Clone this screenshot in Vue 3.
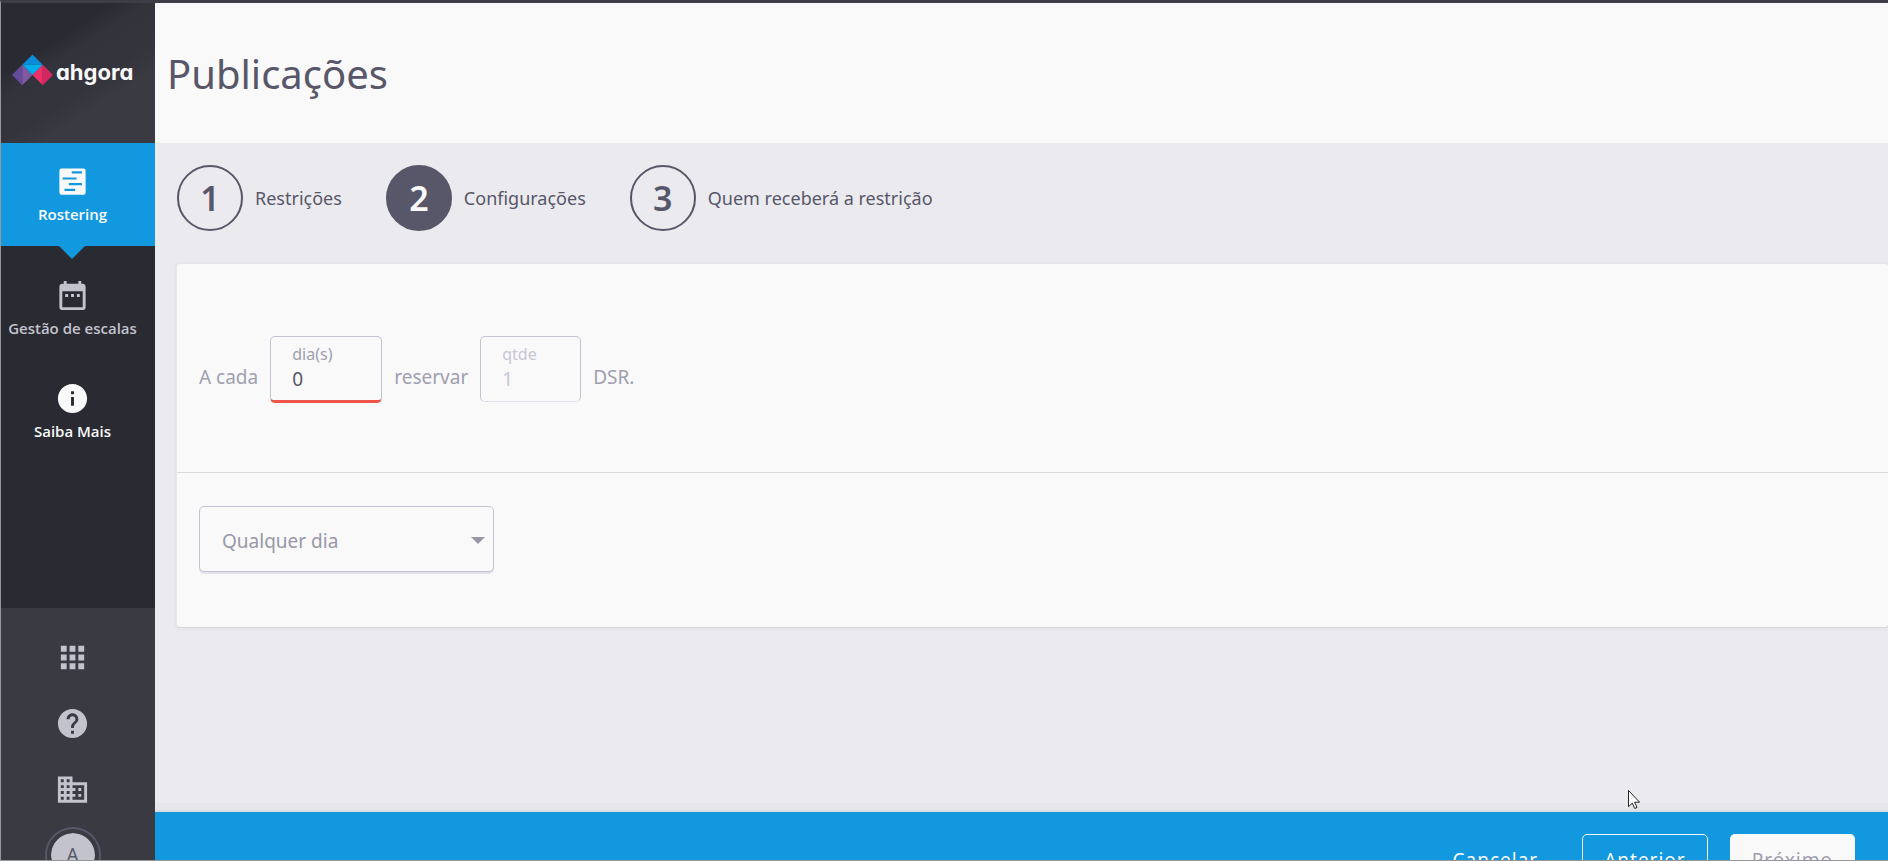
<template>
  <div class="app">
    <aside class="sidebar">
      <a class="logo" href="#">
        <svg class="logo-mark" viewBox="0 0 42 32" width="41" height="32" aria-hidden="true">
          <path d="M10.5 10.5 21 0l10.5 10.5z" fill="#0b8bd8" />
          <path d="M10.5 10.5h21L21 21z" fill="#00aeee" />
          <path d="M10.5 10.5v21L0 21z" fill="#654c9a" />
          <path d="M10.5 10.5 21 21 10.5 31.5z" fill="#8159a3" />
          <path d="M31.5 10.5v21L21 21z" fill="#ee3068" />
          <path d="M31.5 10.5 42 21 31.5 31.5z" fill="#d42660" />
        </svg>
        <span class="logo-text">ahgora</span>
      </a>

      <nav class="menu">
        <a
          v-for="item in menu"
          :key="item.label"
          href="#"
          class="menu-item"
          :class="item.state"
        >
          <svg class="icon" viewBox="0 0 24 24" aria-hidden="true"><path :d="item.icon" /></svg>
          <span class="menu-label">{{ item.label }}</span>
        </a>
      </nav>

      <div class="tools">
        <button v-for="tool in tools" :key="tool.label" class="tool" type="button" :aria-label="tool.label">
          <svg class="icon" viewBox="0 0 24 24" aria-hidden="true"><path :d="tool.icon" /></svg>
        </button>
        <button class="tool" type="button">
          <span class="avatar"><span class="avatar-letter">A</span></span>
        </button>
      </div>
    </aside>

    <main class="main">
      <header class="page-header">
        <h1 class="page-title">Publicações</h1>
      </header>

      <section class="content">
        <ol class="steps">
          <li v-for="(step, index) in steps" :key="step" class="step">
            <span class="step-number" :class="{ active: index === currentStep }">{{ index + 1 }}</span>
            <span class="step-label">{{ step }}</span>
          </li>
        </ol>

        <form class="card" @submit.prevent>
          <div class="rule-row">
            <span>A cada</span>
            <div class="field invalid">
              <label for="days">dia(s)</label>
              <input id="days" v-model="days" type="text" />
            </div>
            <span>reservar</span>
            <div class="field disabled">
              <label for="amount">qtde</label>
              <input id="amount" v-model="amount" type="text" disabled />
            </div>
            <span>DSR.</span>
          </div>
          <div class="day-row">
            <div class="select-box">
              <select v-model="day" aria-label="Qualquer dia">
                <option value="any">Qualquer dia</option>
              </select>
              <svg class="caret" viewBox="0 0 14 7" aria-hidden="true"><path d="M0 0h14L7 7z" /></svg>
            </div>
          </div>
        </form>
      </section>

      <footer class="footer">
        <div class="actions">
          <button class="btn btn-text" type="button">Cancelar</button>
          <button class="btn btn-outline" type="button" @click="previous">Anterior</button>
          <button class="btn btn-solid" type="button" disabled>Próximo</button>
        </div>
      </footer>
    </main>

    <svg class="pointer" viewBox="0 0 12 19" aria-hidden="true">
      <path d="M.5.5v16.200l3.800-3.600 2.400 5.400 2.300-1-2.400-5.300h5z" />
    </svg>
  </div>
</template>

<script setup>
import { ref } from 'vue'

const menu = [
  {
    label: 'Rostering',
    state: 'active',
    icon: 'M4.500 3h15A1.500 1.500 0 0 1 21 4.500v15a1.500 1.500 0 0 1-1.500 1.500h-15A1.500 1.500 0 0 1 3 19.500v-15A1.500 1.500 0 0 1 4.500 3zM11.500 5v1.500h7V5zM5.200 9.200v1.500h9.600V9.200zM9.500 13v1.500h9V13zM6.500 17v1.500h7.300V17z'
  },
  {
    label: 'Gestão de escalas',
    state: '',
    icon: 'M9 11H7v2h2v-2zm4 0h-2v2h2v-2zm4 0h-2v2h2v-2zm2-7h-1V2h-2v2H8V2H6v2H5c-1.110 0-1.990.9-1.990 2L3 20c0 1.100.89 2 2 2h14c1.100 0 2-.9 2-2V6c0-1.100-.9-2-2-2zm0 16H5V9h14v11z'
  },
  {
    label: 'Saiba Mais',
    state: 'bright',
    icon: 'M12 2C6.480 2 2 6.480 2 12s4.480 10 10 10 10-4.480 10-10S17.520 2 12 2zm1 15h-2v-6h2v6zm0-8h-2V7h2v2z'
  }
]

const tools = [
  {
    label: 'Aplicativos',
    icon: 'M4 8h4V4H4v4zm6 12h4v-4h-4v4zm-6 0h4v-4H4v4zm0-6h4v-4H4v4zm6 0h4v-4h-4v4zm6-10v4h4V4h-4zm-6 4h4V4h-4v4zm6 6h4v-4h-4v4zm0 6h4v-4h-4v4z'
  },
  {
    label: 'Ajuda',
    icon: 'M12 2C6.480 2 2 6.480 2 12s4.480 10 10 10 10-4.480 10-10S17.520 2 12 2zm1 17h-2v-2h2v2zm2.070-7.750l-.9.920C13.450 12.900 13 13.500 13 15h-2v-.5c0-1.100.45-2.100 1.170-2.830l1.240-1.260c.37-.36.59-.86.59-1.410 0-1.100-.9-2-2-2s-2 .9-2 2H8c0-2.210 1.790-4 4-4s4 1.790 4 4c0 .88-.36 1.680-.93 2.250z'
  },
  {
    label: 'Empresa',
    icon: 'M12 7V3H2v18h20V7H12zM6 19H4v-2h2v2zm0-4H4v-2h2v2zm0-4H4V9h2v2zm0-4H4V5h2v2zm4 12H8v-2h2v2zm0-4H8v-2h2v2zm0-4H8V9h2v2zm0-4H8V5h2v2zm10 12h-8v-2h2v-2h-2v-2h2v-2h-2V9h8v10zm-2-8h-2v2h2v-2zm0 4h-2v2h2v-2z'
  }
]

const steps = ['Restrições', 'Configurações', 'Quem receberá a restrição']
const currentStep = ref(1)

const days = ref('0')
const amount = ref('1')
const day = ref('any')

const previous = () => {
  if (currentStep.value > 0) {
    currentStep.value--
  }
}
</script>

<style>
body {
  margin: 0;
}
</style>

<style scoped>
.app {
  position: relative;
  display: flex;
  box-sizing: border-box;
  height: 100vh;
  overflow: hidden;
  border-top: 3px solid #3d3d45;
  border-left: 1px solid #97979b;
  border-bottom: 1px solid #97979b;
  background: #ebebef;
  color: #575769;
  font-family: "Noto Sans", "Open Sans", sans-serif;
}

button,
input,
select {
  font-family: inherit;
}

a {
  text-decoration: none;
}

.icon {
  display: block;
  width: 35px;
  height: 35px;
  fill: currentColor;
}

.sidebar {
  display: flex;
  flex-direction: column;
  flex: 0 0 154px;
  overflow: hidden;
  background: #2a2a32;
}

.logo {
  display: flex;
  align-items: center;
  flex: 0 0 140px;
  gap: 3px;
  box-sizing: border-box;
  padding: 0 0 6px 11px;
  background: linear-gradient(147deg, #2a2a32 30%, #33333b 40%, #34343c 58%, #3a3a43 70%);
}

.logo-mark {
  flex: none;
}

.logo-text {
  padding-top: 4px;
  color: #f9f9f9;
  font-family: Inter, sans-serif;
  font-size: 22px;
  font-weight: 700;
  font-feature-settings: "cv11";
  line-height: 28px;
}

.menu {
  display: flex;
  flex-direction: column;
  flex: 1;
  min-height: 0;
}

.menu-item {
  display: flex;
  flex-direction: column;
  align-items: center;
  gap: 5px;
  box-sizing: border-box;
  height: 103px;
  padding: 21px 11px 0 0;
  color: #c3c3ce;
}

.menu-item.active {
  position: relative;
  margin-bottom: 11px;
  background: #1298de;
  color: #f9f9f9;
}

.menu-item.active::after {
  content: "";
  position: absolute;
  top: 100%;
  left: 58px;
  border: 13px solid transparent;
  border-top-color: #1298de;
  border-bottom: 0;
}

.menu-item.bright {
  color: #f9f9f9;
}

.menu-label {
  font-family: "Open Sans", sans-serif;
  font-size: 15px;
  font-weight: 600;
  line-height: 20px;
  white-space: nowrap;
}

.tools {
  display: flex;
  flex-direction: column;
  align-items: center;
  flex: 0 0 252px;
  box-sizing: border-box;
  height: 252px;
  min-height: 0;
  padding: 16px 11px 0 0;
  background: #3a3a43;
}

.tool {
  display: flex;
  align-items: center;
  justify-content: center;
  flex: 0 0 66px;
  width: 66px;
  padding: 0;
  border: 0;
  background: none;
  color: #c3c3ce;
  cursor: pointer;
}

.avatar {
  display: flex;
  align-items: center;
  justify-content: center;
  width: 44px;
  height: 44px;
  border: 4px solid #3a3a43;
  border-radius: 50%;
  box-shadow: 0 0 0 2px #575769;
  background: #c3c3ce;
  background-clip: padding-box;
}

.avatar-letter {
  color: #575769;
  font-size: 19px;
  line-height: 24px;
}

.main {
  display: flex;
  flex-direction: column;
  flex: 1;
  min-width: 0;
}

.page-header {
  display: flex;
  align-items: center;
  flex: 0 0 140px;
  box-sizing: border-box;
  padding: 2px 12px 0;
  background: #f9f9f9;
}

.page-title {
  margin: 0;
  font-size: 40px;
  font-weight: 400;
  line-height: 56px;
}

.content {
  flex: 1;
  min-height: 0;
  padding: 22px 0 0 22px;
}

.steps {
  display: flex;
  gap: 44px;
  margin: 0 0 33px;
  padding: 0;
  list-style: none;
}

.step {
  display: flex;
  align-items: center;
  gap: 12px;
}

.step-number {
  display: flex;
  align-items: center;
  justify-content: center;
  box-sizing: border-box;
  width: 66px;
  height: 66px;
  border: 2px solid #575769;
  border-radius: 50%;
  font-size: 34px;
  font-weight: 600;
}

.step-number.active {
  background: #575769;
  color: #f9f9f9;
}

.step-label {
  font-size: 18px;
  line-height: 26px;
}

.card {
  border-radius: 3px;
  background: #f9f9f9;
  box-shadow: 0 1px 0 #d5d5dc, 0 1px 0 3px #e6e6eb;
}

.rule-row {
  display: flex;
  align-items: flex-start;
  gap: 12px;
  padding: 72px 22px 69px;
  border-bottom: 1px solid #d9d9de;
  color: #9f9fb0;
  font-size: 19px;
}

.rule-row > span {
  padding-top: 28px;
  line-height: 26px;
}

.field {
  display: flex;
  flex-direction: column;
  box-sizing: border-box;
  width: 112px;
  height: 67px;
  padding: 5px 21px 0;
  border: 1px solid #c3c3d4;
  border-radius: 5px;
}

.field label {
  font-size: 16px;
  line-height: 24px;
}

.field input {
  width: 100%;
  height: 26px;
  padding: 0;
  border: 0;
  outline: 0;
  background: none;
  color: #575769;
  font-size: 19px;
}

.field.invalid {
  border-bottom: 3px solid #ec5547;
}

.field.disabled {
  width: 101px;
  height: 66px;
  border-bottom-style: dotted;
  color: #c7c7d6;
}

.field.disabled input {
  color: #c7c7d6;
}

.day-row {
  padding: 33px 22px 55px;
}

.select-box {
  position: relative;
  width: 295px;
}

.select-box select {
  display: block;
  box-sizing: border-box;
  width: 100%;
  height: 66px;
  padding: 4px 40px 0 22px;
  border: 1px solid #c3c3d4;
  border-radius: 5px;
  appearance: none;
  background: #f9f9f9;
  box-shadow: 0 2px 0 #e2e2e9;
  color: #9898a8;
  font-size: 19px;
}

.caret {
  position: absolute;
  top: 31px;
  right: 9px;
  width: 14px;
  height: 7px;
  fill: #9898a8;
  pointer-events: none;
}

.footer {
  flex: 0 0 48px;
  height: 48px;
  min-height: 0;
  background: #1298de;
  box-shadow: 0 -2px 0 #dbdbe2, 0 -9px 0 #e6e6eb;
}

.actions {
  display: flex;
  justify-content: flex-end;
  gap: 22px;
  padding: 22px 33px;
}

.btn {
  height: 52px;
  padding: 0 21px;
  border: 1px solid transparent;
  border-radius: 5px;
  background: none;
  color: #f9f9f9;
  font-size: 19px;
  letter-spacing: 1px;
  cursor: pointer;
}

.btn-outline {
  border-color: #f9f9f9;
}

.btn-solid {
  background: #f9f9f9;
  color: #9f9fb0;
}

.pointer {
  position: absolute;
  right: 248px;
  bottom: 51px;
  width: 12px;
  height: 19px;
  fill: #fff;
  stroke: #22222c;
  stroke-width: 1;
  pointer-events: none;
}
</style>
